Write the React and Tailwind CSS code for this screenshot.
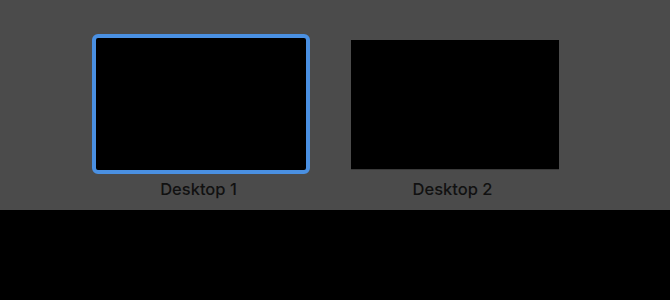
export default function App() {
  return (
    <div className="w-[670px] h-[300px] bg-black" style={{ fontFamily: 'Inter, "Liberation Sans", sans-serif' }}>
      <div className="h-[210px] bg-[#4b4b4b] flex items-start pl-[92px] pt-[34px] gap-[36px]">
        <div className="flex flex-col items-center">
          <div className="w-[218px] h-[140px] rounded-[6px] border-[4px] border-[#4a90e2] bg-black" />
          <div className="mt-[5px] pr-[5px] text-[16.5px] font-medium leading-[20px] text-[#111111]">Desktop 1</div>
        </div>
        <div className="flex flex-col items-center">
          <div className="w-[218px] h-[140px] p-[5px] pt-[6px] pb-[4px]">
            <div className="w-full h-full bg-black border-b border-[#3a3a3a]" />
          </div>
          <div className="mt-[5px] pr-[5px] text-[16.5px] font-medium leading-[20px] text-[#111111]">Desktop 2</div>
        </div>
      </div>
    </div>
  );
}
